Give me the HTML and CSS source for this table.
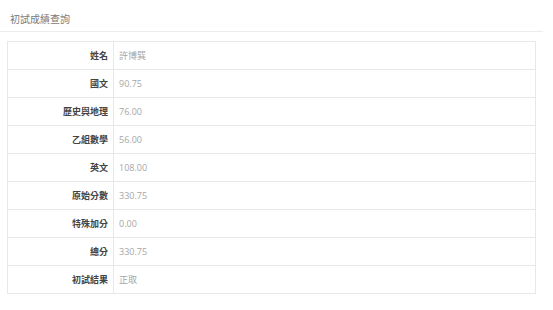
FILE: index.html
```html
<!DOCTYPE html>
<html lang="zh-Hant">
<head>
<meta charset="utf-8">
<link rel="stylesheet" href="styles.css">
</head>
<body>
<div class="header"><h1 class="title">初試成績查詢</h1></div>
<div class="content">
<table class="scores">
<tr><th>姓名</th><td>許博巽</td></tr>
<tr><th>國文</th><td>90.75</td></tr>
<tr><th>歷史與地理</th><td>76.00</td></tr>
<tr><th>乙組數學</th><td>56.00</td></tr>
<tr><th>英文</th><td>108.00</td></tr>
<tr><th>原始分數</th><td>330.75</td></tr>
<tr><th>特殊加分</th><td>0.00</td></tr>
<tr><th>總分</th><td>330.75</td></tr>
<tr><th>初試結果</th><td>正取</td></tr>
</table>
</div>
</body>
</html>
```
FILE: styles.css
```css
html, body {
  margin: 0;
  padding: 0;
  background: #fff;
  font-family: "Open Sans", "Noto Sans CJK TC", sans-serif;
}
.header {
  width: 543px;
  height: 31px;
  border-bottom: 1px solid #ececec;
  box-sizing: content-box;
  display: flex;
  align-items: center;
}
.title {
  margin: 0 0 0 10px;
  font-size: 10px;
  font-weight: 400;
  color: #7a7a7a;
  line-height: 14px;
  padding-top: 6px;
}
.content {
  padding: 9px 0 0 7px;
}
.scores {
  border-collapse: collapse;
  width: 529px;
  border: 1px solid #e8e8e8;
  font-size: 9px;
}
.scores th, .scores td {
  height: 27px;
  padding: 0;
  border: 1px solid #e8e8e8;
  vertical-align: middle;
  line-height: 12px;
}
.scores th {
  width: 100px;
  text-align: right;
  padding-right: 5px;
  font-weight: 700;
  color: #444;
}
.scores td {
  padding-left: 5px;
  text-align: left;
  color: #a6a6a6;
  font-weight: 400;
}
```
